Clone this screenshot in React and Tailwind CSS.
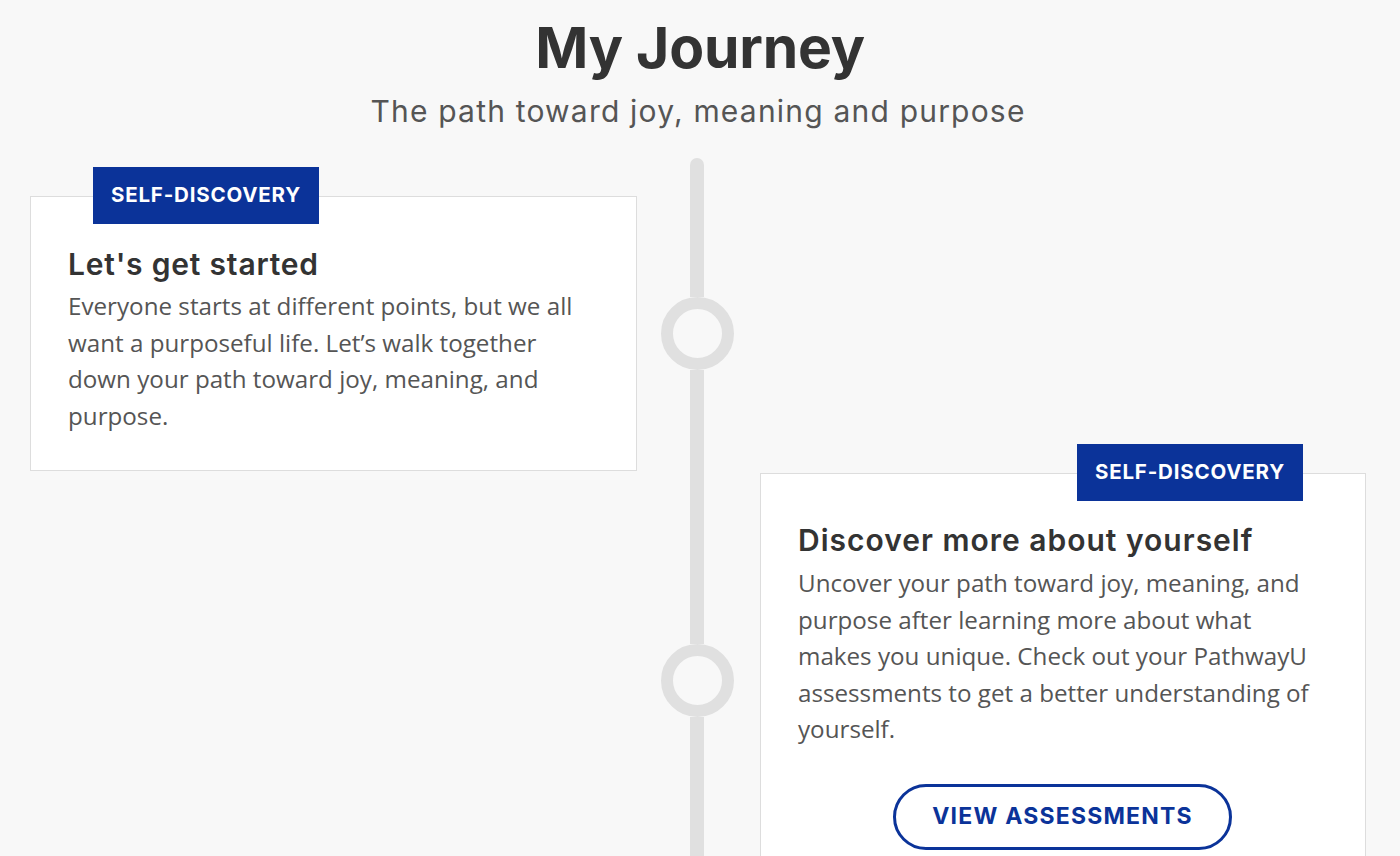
import React from "react";

const heading = { fontFamily: "Inter, 'Liberation Sans', sans-serif" };
const body = { fontFamily: "'Open Sans', 'Liberation Sans', sans-serif" };

function Tag() {
  return (
    <div
      className="bg-[#0b3399] text-white font-bold text-[20.5px] tracking-[0.8px] leading-none h-[57px] w-[226px] flex items-center justify-center"
      style={heading}
    >
      SELF-DISCOVERY
    </div>
  );
}

function Line({ h, top }) {
  return (
    <div
      className={`w-[14px] bg-[#e0e0e0] ${top ? "rounded-t-full" : ""}`}
      style={{ height: h }}
    />
  );
}

function Circle() {
  return <div className="w-[73px] h-[73px] rounded-full border-[12px] border-[#e0e0e0] shrink-0" />;
}

export default function App() {
  return (
    <div className="w-[1400px] h-[856px] overflow-hidden bg-[#f8f8f8]">
      <header className="flex flex-col items-center pt-[18px]">
        <h1 className="text-[57px] leading-[60px] font-bold text-[#333333] tracking-[-0.2px]" style={heading}>
          My Journey
        </h1>
        <p className="text-[30px] leading-[40px] mt-[13px] text-[#555555] font-normal tracking-[1.2px] -ml-[4px]" style={heading}>
          The path toward joy, meaning and purpose
        </p>
      </header>

      <div className="grid grid-cols-[607px_123px_606px] grid-rows-[313px_auto] pl-[30px] mt-[27px]">
        {/* left card */}
        <div className="col-start-1 row-start-1 pt-[38px]">
          <div className="bg-white border border-[#dddddd] h-[275px] pl-[37px] pr-[50px]">
            <div className="-mt-[30px] ml-[25px]">
              <Tag />
            </div>
            <h2 className="mt-[22px] text-[30px] leading-[36px] font-semibold text-[#333333] tracking-[0.8px]" style={heading}>
              Let's get started
            </h2>
            <p className="mt-[6px] text-[24.2px] leading-[36.5px] text-[#555555]" style={body}>
              Everyone starts at different points, but we all want a purposeful life. Let’s walk together down your path toward joy, meaning, and purpose.
            </p>
          </div>
        </div>

        {/* timeline */}
        <div className="col-start-2 row-start-1 row-span-2 flex flex-col items-center pr-[3px]">
          <Line h={139} top />
          <Circle />
          <Line h={274} />
          <Circle />
          <Line h={300} />
        </div>

        {/* right card */}
        <div className="col-start-3 row-start-2 pt-[2px]">
          <div className="bg-white border border-[#dddddd] h-[420px] pl-[37px] pr-[50px]">
            <div className="-mt-[30px] flex justify-end mr-[12px]">
              <Tag />
            </div>
            <h2 className="mt-[21px] text-[30px] leading-[36px] font-semibold text-[#333333] tracking-[1px]" style={heading}>
              Discover more about yourself
            </h2>
            <p className="mt-[7px] text-[24.2px] leading-[36.5px] text-[#555555]" style={body}>
              Uncover your path toward joy, meaning, and purpose after learning more about what makes you unique. Check out your PathwayU assessments to get a better understanding of yourself.
            </p>
            <div className="flex justify-center mt-[36px] -mr-[12px]">
              <button
                className="w-[339px] h-[66px] rounded-full border-[3px] border-[#0b3399] bg-white text-[#0b3399] font-bold text-[23px] tracking-[1.2px]"
                style={heading}
              >
                VIEW ASSESSMENTS
              </button>
            </div>
          </div>
        </div>
      </div>
    </div>
  );
}
